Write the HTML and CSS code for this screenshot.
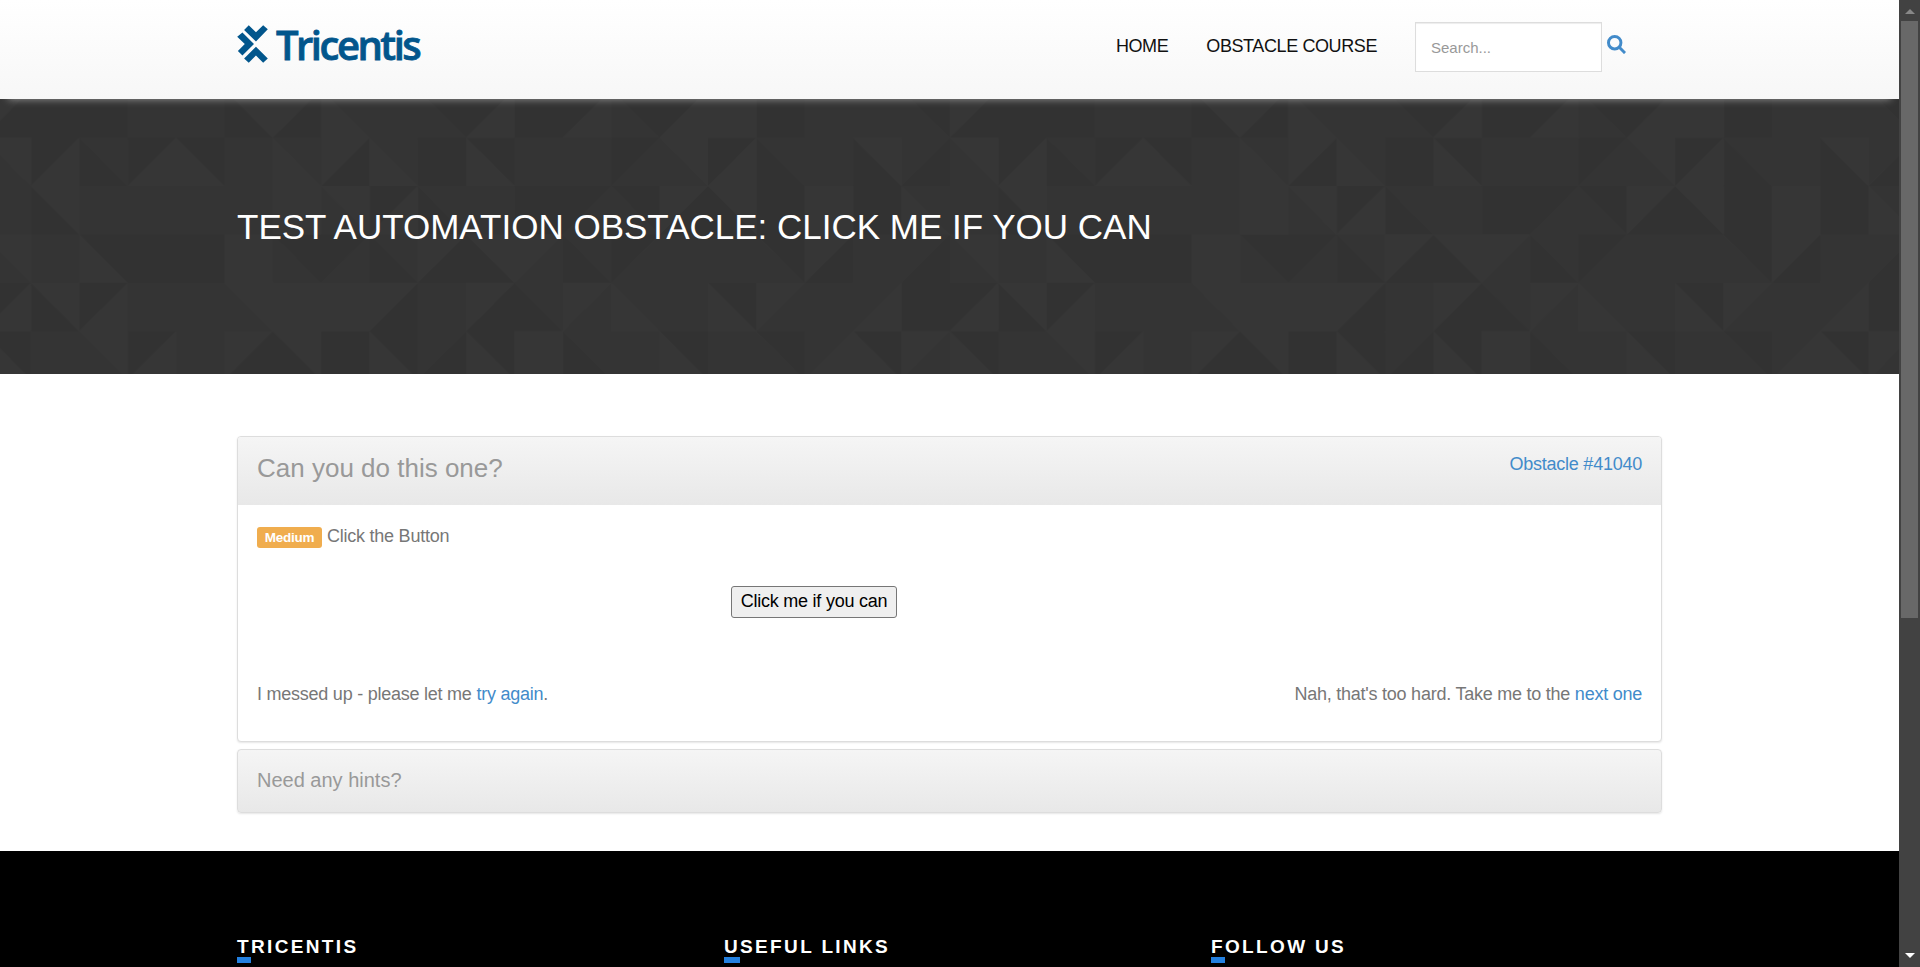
FILE: index.html
```html
<!DOCTYPE html>
<html lang="en">
<head>
<meta charset="utf-8">
<title>Obstacle: Click me if you can</title>
<link rel="stylesheet" href="styles.css">
</head>
<body>
<div class="viewport">
<div class="page">
  <header class="header">
    <div class="container header-row">
      <a class="logo">
        <svg class="logo-mark" viewBox="0 0 31 38.500" aria-hidden="true">
          <path d="M11.700 .3L19 7.300 26.300 .3 31 4.300 19 16.700 7 5z"/>
          <path d="M5.300 7.700L17 19.300 5.300 31 .7 26.300 7.700 19.300 0 12z"/>
          <path d="M19 22L31 34 26.300 38.300 19 31 11.700 38.300 7 34z"/>
        </svg>
        <span class="logo-text">Tricentis</span>
      </a>
      <nav class="nav">
        <a class="nav-link">HOME</a>
        <a class="nav-link">OBSTACLE COURSE</a>
        <input class="search" type="text" placeholder="Search...">
        <svg class="search-icon" viewBox="0 0 18 18" aria-hidden="true"><circle cx="7.300" cy="7.300" r="5.900"/><path d="M11.400 11.400l5.700 5.700"/></svg>
      </nav>
    </div>
  </header>
  <section class="banner">
    <svg class="banner-art" aria-hidden="true">
      <defs>
        <pattern id="tri" width="20" height="6" patternUnits="userSpaceOnUse" patternTransform="translate(-17.400 -9.600) scale(48.360)">
          <path class="dark" d="M1 0v1h-1zM1 0h2v1h-2zM5 0v1h1zM7 0v1h-1zM9 0h1v1zM10 0h1l-1 1zM11 0h1v1h-1zM12 0h1l-1 1zM13 0h1v1zM14 0h1l-1 1zM16 0h1v1h-1zM19 0h1v1z
            M1 1h1l-1 1zM2 1v1h1zM3 1h1l-1 1zM4 1h1v1zM8 1v1h-1zM9 1h1v1h-1zM10 1h1v1zM13 1h1l-1 1zM15 1h1l-1 1zM16 1v1h1zM18 1v1h1zM20 1v1h-1z
            M1 2v1h1zM8 2h1l-1 1zM9 2v1h1zM11 2h2l-1 1h-1zM13 2h1v1zM15 2v1h-1zM15 2v1h1zM16 2h1v1h-1zM18 2h1v1h-1z
            M2 3h1v1zM3 3h2v1h-2zM6 3h1v1zM7 3h1l-1 1zM8 3v1h1zM10 3v1h-1zM10 3v1h1zM12 3v1h1zM13 3h1l-1 1zM16 3h1v1zM18 3v1h-1zM20 3v1h-1z
            M0 4h1l-1 1zM1 4v1h1zM2 4h1l-1 1zM9 4v1h-1zM11 4v1h-1zM11 4v1h1zM15 4h1v1zM19 4h1v1h-1z
            M0 5h1v1zM3 5h1l-1 1zM6 5v1h-1zM6 5v1h1zM7 5h1v1h-1zM8 5h1v1zM10 5v1h-1zM10 5h1v1zM12 5v1h1zM14 5h1v1zM16 5h1v1zM18 5h1v1z"/>
          <path class="light" d="M0 0h1l-1 1zM5 0h1v1zM6 0h1l-1 1zM7 0v1h1zM11 0v1h-1zM13 0v1h-1zM15 0v1h-1zM15 0h1v1h-1z
            M0 1h1v1zM2 1v1h-1zM4 1v1h-1zM4 1v1h1zM6 1v1h1zM7 1h1l-1 1zM8 1v1h1zM10 1v1h1zM14 1h1v1zM16 1v1h-1zM18 1h1v1z
            M1 2h1v1zM6 2h1v1h-1zM7 2h1v1zM9 2v1h-1zM14 2h1l-1 1zM15 2h1v1zM17 2h1v1h-1zM19 2v1h1z
            M0 3h1v1zM2 3v1h1zM5 3h1v1h-1zM9 3h1l-1 1zM10 3h1v1zM11 3h1l-1 1zM17 3h1l-1 1z
            M1 4v1h-1zM1 4h1v1zM3 4v1h-1zM5 4h1v1zM6 4h2v1h-2zM8 4h1l-1 1zM10 4h1l-1 1zM12 4h1l-1 1zM13 4v1h1zM15 4v1h1zM16 4h1l-1 1zM19 4v1h-1z
            M0 5v1h1zM2 5h1v1zM4 5v1h-1zM5 5h1l-1 1zM6 5h1v1zM8 5v1h1zM10 5v1h1zM11 5h1v1h-1zM14 5v1h1zM18 5v1h-1zM18 5v1h1zM19 5h1l-1 1z"/>
        </pattern>
      </defs>
      <rect width="100%" height="100%" fill="url(#tri)"/>
    </svg>
    <div class="container"><h1 class="title">TEST AUTOMATION OBSTACLE: CLICK ME IF YOU CAN</h1></div>
  </section>
  <main class="container main">
    <section class="panel">
      <div class="panel-head">
        <h2 class="panel-title">Can you do this one?</h2>
        <a class="link number">Obstacle #41040</a>
      </div>
      <div class="panel-body">
        <p class="task"><span class="label">Medium</span> <span class="task-text">Click the Button</span></p>
        <button class="click">Click me if you can</button>
        <div class="actions">
          <p class="retry">I messed up - please let me <a class="link">try again</a>.</p>
          <p class="skip">Nah, that's too hard. Take me to the <a class="link">next one</a></p>
        </div>
      </div>
    </section>
    <section class="panel hints"><h3 class="hints-title">Need any hints?</h3></section>
  </main>
  <footer class="footer">
    <div class="container footer-row">
      <h4 class="foot-title"><span class="initial">T</span>RICENTIS</h4>
      <h4 class="foot-title"><span class="initial">U</span>SEFUL LINKS</h4>
      <h4 class="foot-title"><span class="initial">F</span>OLLOW US</h4>
    </div>
  </footer>
</div>
<div class="scrollbar" aria-hidden="true">
  <svg class="arrow up" viewBox="0 0 10 5"><path d="M0 5l5-5 5 5z"/></svg>
  <div class="thumb"></div>
  <svg class="arrow down" viewBox="0 0 10 5"><path d="M0 0h10l-5 5z"/></svg>
</div>
</div>
</body>
</html>
```
FILE: styles.css
```css
* { box-sizing: border-box; }
body { margin: 0; font-family: "Liberation Sans", Arial, sans-serif; font-size: 18px; letter-spacing: -0.24px; color: #777; background: #fff; }
h1, h2, h3, h4, p { margin: 0; font-weight: 400; }
.viewport { display: flex; height: 967px; overflow: hidden; }
.page { flex: 1; display: flex; flex-direction: column; }
.container { width: 1425px; margin: 0 auto; position: relative; }
.header { position: relative; z-index: 1; height: 99px; background: linear-gradient(#fff, #f7f7f7); box-shadow: 0 8px 8px -8px #999; }
.header-row { display: flex; justify-content: space-between; align-items: flex-start; }
.logo { display: flex; margin-top: 25px; color: #02568c; }
.logo-mark { width: 31px; height: 38px; fill: #02568c; }
.logo-text { margin-left: 8px; font-family: "Open Sans", sans-serif; font-weight: 600; font-size: 40px; line-height: 40px; letter-spacing: -2.5px; -webkit-text-stroke: .8px #02568c; }
.nav { display: flex; align-items: flex-start; margin: 22px 37px 0 0; color: #111; letter-spacing: -0.4px; }
.nav-link { margin: 13px 38px 0 0; line-height: 22px; }
.search { width: 187px; height: 50px; border: 1px solid #ddd; padding: 0 15px; background: #fff; font: 15px "Liberation Sans", Arial, sans-serif; letter-spacing: 0; box-shadow: inset 0 1px 1px rgba(0, 0, 0, .075); }
.search::placeholder { color: #999; opacity: 1; }
.search-icon { width: 19px; height: 19px; margin: 13px -1px 0 5px; fill: none; stroke: #428bca; stroke-width: 2.8; }
.banner { position: relative; height: 275px; background: #343434; }
.banner-art { position: absolute; inset: 0; width: 100%; height: 100%; }
.dark { fill: #323232; }
.light { fill: #363636; }
.title { padding-top: 107px; font-size: 35px; line-height: 42px; letter-spacing: 0; color: #fff; }
.main { height: 477px; padding-top: 62px; }
.panel { border: 1px solid #ddd; border-radius: 4px; box-shadow: 0 1px 2px rgba(0, 0, 0, .1); background: #fff; }
.panel-head { height: 68px; display: flex; justify-content: space-between; padding: 13px 19px 0; background: linear-gradient(#f5f5f5, #e8e8e8); border-radius: 3px 3px 0 0; }
.panel-title { font-size: 26px; line-height: 36px; color: #999; letter-spacing: 0; }
.link { color: #428bca; }
.number { line-height: 28px; }
.panel-body { height: 236px; padding: 18px 19px 19px; }
.task { line-height: 26px; height: 63px; display: flex; }
.label { width: 65px; height: 21px; margin: 4px 5px 0 0; border-radius: 3px; background: #f0ad4e; color: #fff; font-size: 13.500px; font-weight: 700; line-height: 21px; text-align: center; }
.click { display: block; margin-left: 474px; width: 166px; height: 32px; padding: 0 0 2px; border: 1px solid #767676; border-radius: 3px; background: #efefef; color: #000; font: inherit; letter-spacing: inherit; white-space: nowrap; }
.actions { display: flex; justify-content: space-between; margin-top: 63px; line-height: 26px; }
.hints { margin-top: 7px; height: 64px; padding: 17px 19px; background: linear-gradient(#f5f5f5, #e8e8e8); }
.hints-title { font-size: 20px; line-height: 26px; letter-spacing: 0; color: #999; }
.footer { flex: 1; background: #000; color: #fff; }
.footer-row { display: grid; grid-template-columns: 487px 487px 1fr; padding-top: 85px; }
.foot-title { font-size: 19px; font-weight: 700; line-height: 22px; letter-spacing: 2.35px; }
.initial { display: inline-block; height: 27px; border-bottom: 6px solid #2380e0; }
.scrollbar { width: 21px; height: 967px; background: #424242; display: flex; flex-direction: column; align-items: center; }
.arrow { width: 10px; height: 5px; }
.up { margin-top: 9px; fill: #888; }
.thumb { width: 17px; height: 597px; margin-top: 7px; background: #686868; }
.down { margin-top: auto; margin-bottom: 9px; fill: #fff; }
```
